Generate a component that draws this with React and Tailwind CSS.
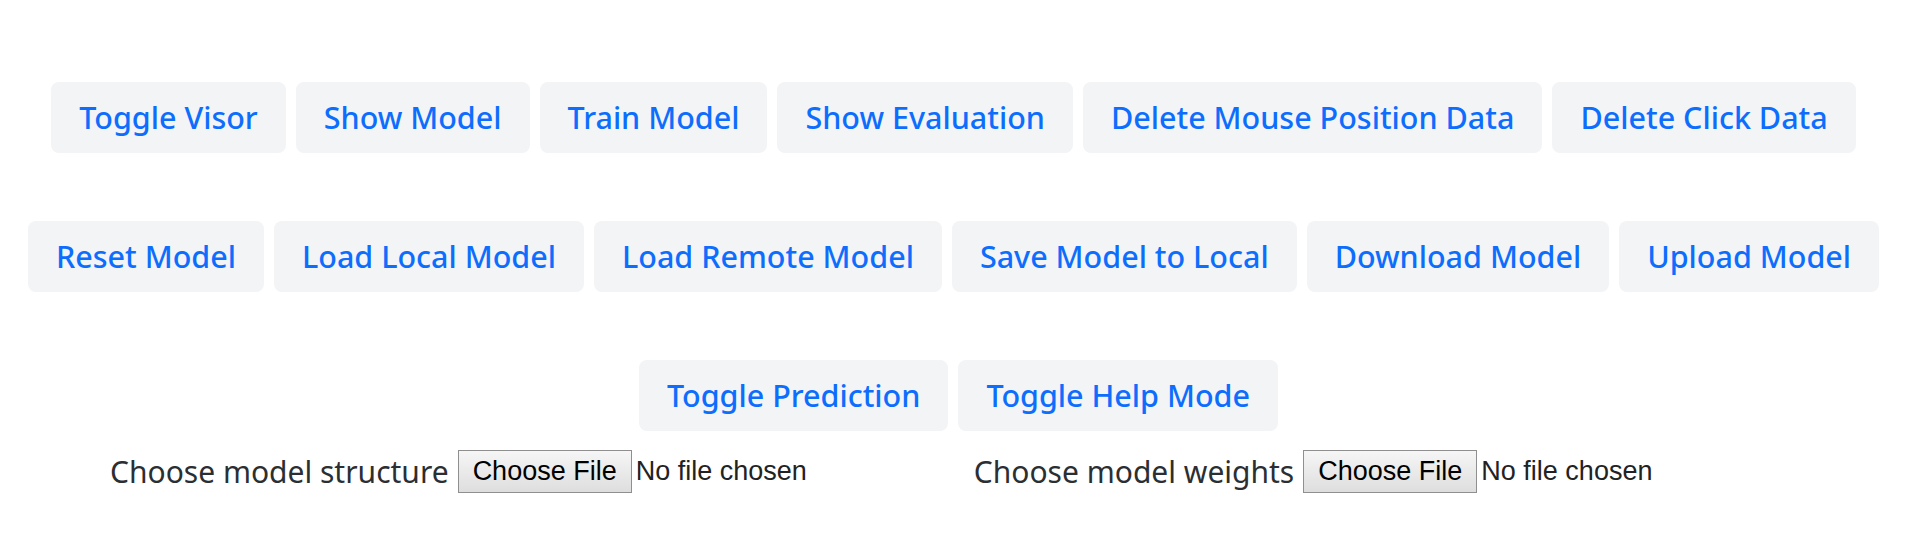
const rows = [
  [
    "Toggle Visor",
    "Show Model",
    "Train Model",
    "Show Evaluation",
    "Delete Mouse Position Data",
    "Delete Click Data",
  ],
  [
    "Reset Model",
    "Load Local Model",
    "Load Remote Model",
    "Save Model to Local",
    "Download Model",
    "Upload Model",
  ],
  ["Toggle Prediction", "Toggle Help Mode"],
];

const ActionButton = ({ label }) => (
  <button className="h-[71px] px-[28px] rounded-lg bg-gray-100 text-[#0d6efd] text-[30.5px] font-medium leading-none whitespace-nowrap">
    {label}
  </button>
);

const FilePicker = ({ label }) => (
  <div className="flex items-center">
    <span className="text-[30px] text-[#2b2f33] mr-[9px]">{label}</span>
    <span className="h-[43px] px-[14px] flex items-center border border-[#8f8f8f] bg-gradient-to-b from-[#f6f6f6] to-[#dedede] text-black text-[27px] font-['Liberation_Sans',Arial,sans-serif]">
      Choose File
    </span>
    <span className="ml-[4px] text-[27px] text-[#222] font-['Liberation_Sans',Arial,sans-serif]">
      No file chosen
    </span>
  </div>
);

export default function App() {
  return (
    <div className="min-h-[554px] bg-white pt-[82px] font-['Noto_Sans','Open_Sans',sans-serif]">
      <div className="flex flex-col gap-[68px]">
        {rows.map((row, i) => (
          <div
            key={i}
            className={i < 2 ? "flex justify-center gap-2.5 pr-[10px]" : "flex justify-center gap-2.5"}
          >
            {row.map((label) => (
              <ActionButton key={label} label={label} />
            ))}
          </div>
        ))}
      </div>
      <div className="flex gap-[167px] pl-[110px] mt-[18px]">
        <FilePicker label="Choose model structure" />
        <FilePicker label="Choose model weights" />
      </div>
    </div>
  );
}
